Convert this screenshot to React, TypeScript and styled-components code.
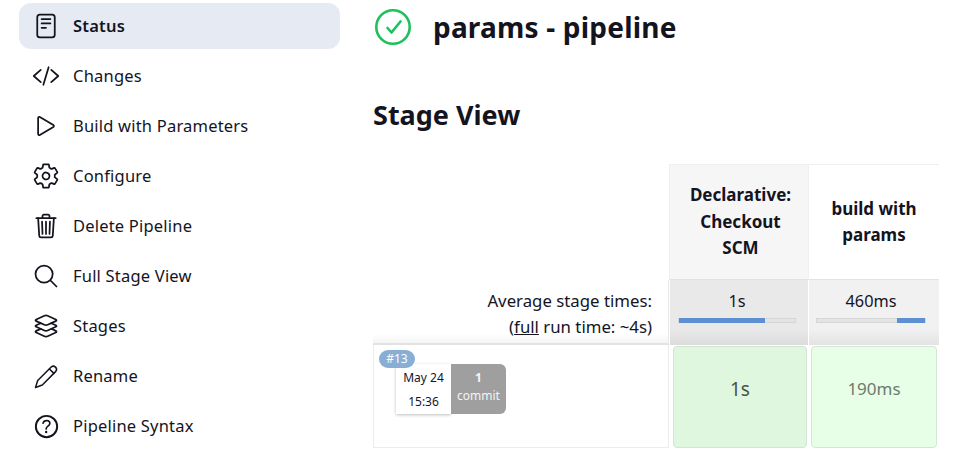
import React from 'react';
import styled, { createGlobalStyle } from 'styled-components';
import {
  IoReaderOutline,
  IoCodeSlashOutline,
  IoPlayOutline,
  IoSettingsOutline,
  IoTrashOutline,
  IoSearchOutline,
  IoLayersOutline,
  IoHelpCircleOutline,
} from 'react-icons/io5';

const GlobalStyle = createGlobalStyle`
  html, body {
    margin: 0;
    padding: 0;
    background: #fff;
    overflow: hidden;
  }
  body {
    font-family: "Noto Sans", "Open Sans", sans-serif;
    color: #14141f;
  }
`;

const PencilIcon = () => (
  <svg width="26" height="26" viewBox="0 0 26 26" fill="none" stroke="currentColor" strokeWidth="1.5" strokeLinejoin="round" strokeLinecap="round">
    <path d="M2.5 24.5l2.2-7L18.2 4a3.2 3.2 0 0 1 4.6 4.4L9.3 22z" />
    <path d="M16.4 6l4.5 4.4" />
  </svg>
);

const menu = [
  { label: 'Status', icon: <IoReaderOutline />, active: true },
  { label: 'Changes', icon: <IoCodeSlashOutline /> },
  { label: 'Build with Parameters', icon: <IoPlayOutline /> },
  { label: 'Configure', icon: <IoSettingsOutline /> },
  { label: 'Delete Pipeline', icon: <IoTrashOutline /> },
  { label: 'Full Stage View', icon: <IoSearchOutline /> },
  { label: 'Stages', icon: <IoLayersOutline /> },
  { label: 'Rename', icon: <PencilIcon /> },
  { label: 'Pipeline Syntax', icon: <IoHelpCircleOutline />, big: true },
];

function App() {
  return (
    <Page>
      <GlobalStyle />
      <Sidebar>
        {menu.map((item) => (
          <MenuItem key={item.label} $active={item.active}>
            <MenuIcon $big={item.big}>{item.icon}</MenuIcon>
            {item.label}
          </MenuItem>
        ))}
      </Sidebar>
      <Main>
        <TitleRow>
          <svg width="39" height="38" viewBox="0 0 39 38" fill="none">
            <circle cx="20" cy="19" r="16.7" stroke="#1ec05a" strokeWidth="2.6" />
            <path d="M14.5 20l4 4.5 9-11" stroke="#1ec05a" strokeWidth="2.6" strokeLinecap="round" strokeLinejoin="round" />
          </svg>
          <Title>params - pipeline</Title>
        </TitleRow>
        <SubTitle>Stage View</SubTitle>
        <StageTable>
          <HeaderSpacer />
          <StageHead $shade>Declarative: Checkout SCM</StageHead>
          <StageHead>build with params</StageHead>

          <AverageLabel>
            <div>Average stage times:</div>
            <div>
              (<FullLink>full</FullLink> run time: ~4s)
            </div>
          </AverageLabel>
          <AverageCell $shade>
            1s
            <Track>
              <Fill $left={0} $width={74} />
            </Track>
          </AverageCell>
          <AverageCell>
            460ms
            <Track>
              <Fill $left={74} $width={26} />
            </Track>
          </AverageCell>

          <BuildCell>
            <Badge>#13</Badge>
            <DateBox>
              <span>May 24</span>
              <span>15:36</span>
            </DateBox>
            <CommitBox>
              <strong>1</strong>
              <span>commit</span>
            </CommitBox>
          </BuildCell>
          <ResultWrap $shade>
            <Result $shade>1s</Result>
          </ResultWrap>
          <ResultWrap>
            <Result $faded>190ms</Result>
          </ResultWrap>
        </StageTable>
      </Main>
    </Page>
  );
}

const Page = styled.div`
  display: flex;
  width: 953px;
  height: 449px;
  overflow: hidden;
`;

const Sidebar = styled.nav`
  width: 321px;
  margin-left: 19px;
  padding-top: 3px;
  display: flex;
  flex-direction: column;
  gap: 4px;
`;

const MenuItem = styled.div<{ $active?: boolean }>`
  box-sizing: border-box;
  height: 46px;
  flex-shrink: 0;
  display: flex;
  align-items: center;
  gap: 14px;
  padding: 0 0 2px 14px;
  border-radius: 12px;
  font-size: 16.5px;
  letter-spacing: 0.2px;
  font-weight: ${(p) => (p.$active ? 600 : 400)};
  background: ${(p) => (p.$active ? '#e6eaf3' : 'transparent')};
`;

const MenuIcon = styled.span<{ $big?: boolean }>`
  width: 26px;
  height: 26px;
  margin-top: 2px;
  display: flex;
  align-items: center;
  justify-content: center;
  font-size: ${(p) => (p.$big ? 31 : 28)}px;

  svg {
    flex: none;
  }
`;

const Main = styled.main`
  margin-left: 33px;
  width: 566px;
`;

const TitleRow = styled.div`
  height: 53px;
  display: flex;
  align-items: center;
  gap: 21px;
`;

const Title = styled.h1`
  margin: 0 0 -1px;
  font-size: 28px;
  letter-spacing: 0.2px;
  font-weight: 700;
  line-height: 54px;
`;

const SubTitle = styled.h2`
  margin: 35px 0 0;
  font-size: 27px;
  font-weight: 700;
  line-height: 54px;
  height: 76px;
`;

const StageTable = styled.div`
  display: grid;
  grid-template-columns: 296px 139px 131px;
  grid-template-rows: 116px 65px 103px;
`;

const HeaderSpacer = styled.div``;

const StageHead = styled.div<{ $shade?: boolean }>`
  display: flex;
  align-items: center;
  justify-content: center;
  text-align: center;
  padding: ${(p) => (p.$shade ? '0 11px 0 14px' : '0 12px')};
  font-size: 17px;
  font-weight: 700;
  line-height: 26.4px;
  background: ${(p) => (p.$shade ? '#f6f6f6' : '#fff')};
  border-top: 1px solid #f0f0f0;
  border-bottom: 1px solid #e2e2e2;
  border-left: 1px solid #f0f0f0;
`;

const AverageLabel = styled.div`
  padding: 8px 16px 0 0;
  text-align: right;
  font-size: 16.8px;
  line-height: 26px;
  border-bottom: 2px solid #e2e2e2;
  border-right: 1px solid #e8e8e8;
  background: linear-gradient(#fff 85%, #f4f4f4);
`;

const FullLink = styled.span`
  text-decoration: underline;
`;

const AverageCell = styled.div<{ $shade?: boolean }>`
  padding: ${(p) => (p.$shade ? '9px 12px 0 8px' : '9px 13px 0 7px')};
  text-align: center;
  font-size: 16.3px;
  line-height: 24px;
  background: ${(p) =>
    p.$shade
      ? 'linear-gradient(#e9e9e9 75%, #dcdcdc)'
      : 'linear-gradient(#f1f1f1 75%, #e3e3e3)'};
  margin-left: 1px;
`;

const Track = styled.div`
  position: relative;
  height: 5px;
  margin: 5px 0 0;
  background: #e4e4e4;
  border: 1px solid #d6d6d6;
  box-sizing: border-box;
`;

const Fill = styled.div<{ $left: number; $width: number }>`
  position: absolute;
  top: -1px;
  bottom: -1px;
  left: ${(p) => p.$left}%;
  width: ${(p) => p.$width}%;
  background: #5e8fd2;
`;

const BuildCell = styled.div`
  position: relative;
  display: flex;
  align-items: flex-start;
  padding: 19px 0 0 22px;
  height: 83px;
  border: 1px solid #ececec;
  border-top: none;
`;

const Badge = styled.div`
  position: absolute;
  left: 5px;
  top: 5px;
  width: 36px;
  height: 18px;
  border-radius: 9px;
  background: #89aed4;
  color: #fff;
  font-size: 12px;
  line-height: 18px;
  text-align: center;
`;

const DateBox = styled.div`
  width: 55px;
  height: 50px;
  display: flex;
  flex-direction: column;
  align-items: center;
  justify-content: center;
  gap: 7px;
  font-size: 12px;
  line-height: 17px;
  box-shadow: 0 1px 3px rgba(0, 0, 0, 0.25);
`;

const CommitBox = styled.div`
  width: 55px;
  height: 50px;
  box-sizing: border-box;
  padding-top: 5px;
  display: flex;
  flex-direction: column;
  align-items: center;
  background: #9f9f9f;
  border-radius: 0 6px 6px 0;
  color: #f4f4f4;
  font-size: 12px;
  line-height: 18px;
`;

const ResultWrap = styled.div<{ $shade?: boolean }>`
  padding: ${(p) => (p.$shade ? '1px 1px 0 4px' : '1px 2px 0 3px')};
  background: #fff;
`;

const Result = styled.div<{ $shade?: boolean; $faded?: boolean }>`
  box-sizing: border-box;
  height: 102px;
  padding-bottom: 17px;
  display: flex;
  align-items: center;
  justify-content: center;
  border: 1px solid ${(p) => (p.$shade ? '#d3e4d3' : '#d6e6d6')};
  border-radius: 4px;
  background: ${(p) => (p.$shade ? '#dff7df' : '#e6ffe6')};
  color: ${(p) => (p.$faded ? '#6f7a6f' : '#4a524a')};
  font-size: ${(p) => (p.$shade ? 19 : 17)}px;
`;

export default App;
